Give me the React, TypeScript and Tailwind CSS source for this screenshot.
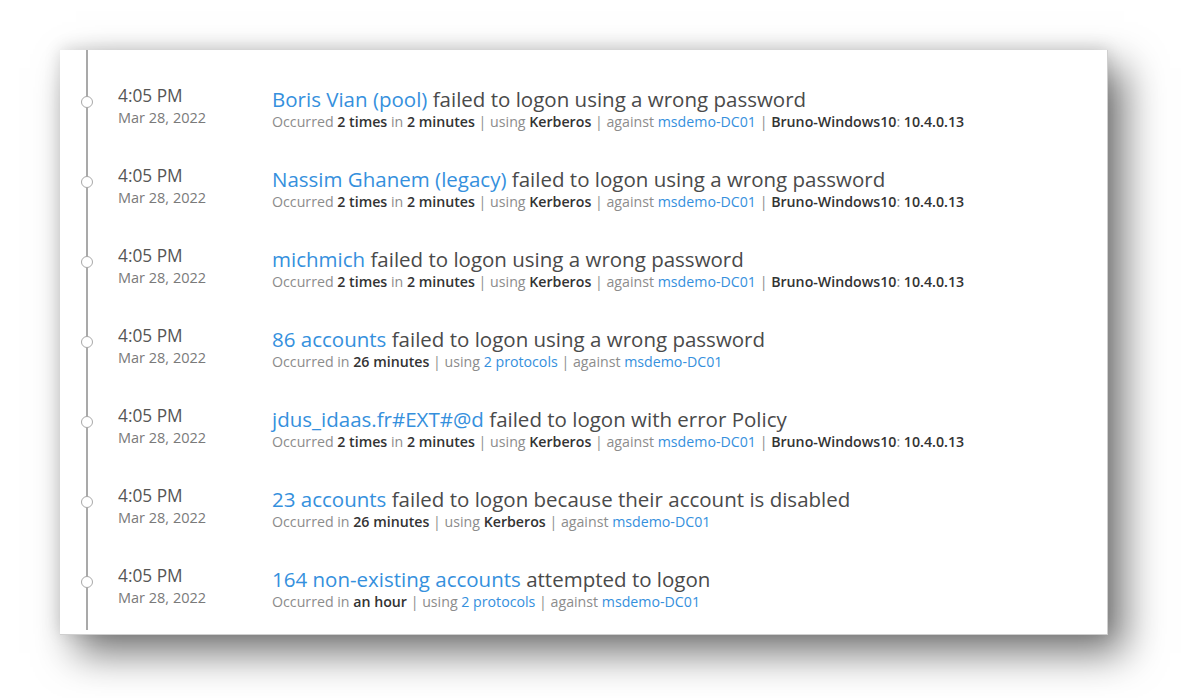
import type { ReactNode } from 'react'

type Part = { t: string; k?: 'b' | 'l' }

interface Alert {
  who: string
  what: string
  meta: Part[]
}

const std: Part[] = [
  { t: 'Occurred ' },
  { t: '2 times', k: 'b' },
  { t: ' in ' },
  { t: '2 minutes', k: 'b' },
  { t: ' | using ' },
  { t: 'Kerberos', k: 'b' },
  { t: ' | against ' },
  { t: 'msdemo-DC01', k: 'l' },
  { t: ' | ' },
  { t: 'Bruno-Windows10', k: 'b' },
  { t: ': ' },
  { t: '10.4.0.13', k: 'b' },
]

const ALERTS: Alert[] = [
  { who: 'Boris Vian (pool)', what: ' failed to logon using a wrong password', meta: std },
  { who: 'Nassim Ghanem (legacy)', what: ' failed to logon using a wrong password', meta: std },
  { who: 'michmich', what: ' failed to logon using a wrong password', meta: std },
  {
    who: '86 accounts',
    what: ' failed to logon using a wrong password',
    meta: [
      { t: 'Occurred in ' },
      { t: '26 minutes', k: 'b' },
      { t: ' | using ' },
      { t: '2 protocols', k: 'l' },
      { t: ' | against ' },
      { t: 'msdemo-DC01', k: 'l' },
    ],
  },
  { who: 'jdus_idaas.fr#EXT#@d', what: ' failed to logon with error Policy', meta: std },
  {
    who: '23 accounts',
    what: ' failed to logon because their account is disabled',
    meta: [
      { t: 'Occurred in ' },
      { t: '26 minutes', k: 'b' },
      { t: ' | using ' },
      { t: 'Kerberos', k: 'b' },
      { t: ' | against ' },
      { t: 'msdemo-DC01', k: 'l' },
    ],
  },
  {
    who: '164 non-existing accounts',
    what: ' attempted to logon',
    meta: [
      { t: 'Occurred in ' },
      { t: 'an hour', k: 'b' },
      { t: ' | using ' },
      { t: '2 protocols', k: 'l' },
      { t: ' | against ' },
      { t: 'msdemo-DC01', k: 'l' },
    ],
  },
]

function Meta({ parts }: { parts: Part[] }) {
  const out: ReactNode[] = parts.map((p, i) =>
    p.k === 'b' ? (
      <span key={i} className="font-semibold text-[#333]">{p.t}</span>
    ) : p.k === 'l' ? (
      <span key={i} className="text-[#3590dd]">{p.t}</span>
    ) : (
      <span key={i}>{p.t}</span>
    ),
  )
  return <div className="text-[14.2px] leading-[19px] text-[#8c8c8c] whitespace-pre">{out}</div>
}

export default function App() {
  return (
    <div
      className="w-[1198px] h-[698px] bg-white overflow-hidden pt-[45px] pl-[60px]"
      style={{ fontFamily: '"Open Sans", "Noto Sans", sans-serif' }}
    >
      <div className="w-[1048px] h-[585px] bg-white border-r border-b border-[#cfcfcf] shadow-[16px_18px_38px_rgba(0,0,0,0.55),0_-2px_16px_rgba(0,0,0,0.12)]">
        <div className="ml-[26px] mt-[5px] h-[580px] border-l-2 border-[#a9a9a9] pt-[12px]">
          {ALERTS.map((a, i) => (
            <div key={i} className="relative h-[80px] flex">
              {/* timeline dot */}
              <div className="absolute left-[-7px] top-[34px] w-[12px] h-[12px] rounded-full bg-white border border-[#a9a9a9]" />
              <div className="w-[184px] pl-[30px] pt-[23px]">
                <div className="text-[17.3px] leading-[22px] text-[#555]">4:05 PM</div>
                <div className="text-[14.5px] leading-[21px] text-[#7a7a7a]">Mar 28, 2022</div>
              </div>
              <div className="pt-[24px]">
                <div className="text-[20.5px] leading-[26px] text-[#4a4a4a] whitespace-pre">
                  <span className="text-[#3590dd]">{a.who}</span>
                  {a.what}
                </div>
                <Meta parts={a.meta} />
              </div>
            </div>
          ))}
        </div>
      </div>
    </div>
  )
}
